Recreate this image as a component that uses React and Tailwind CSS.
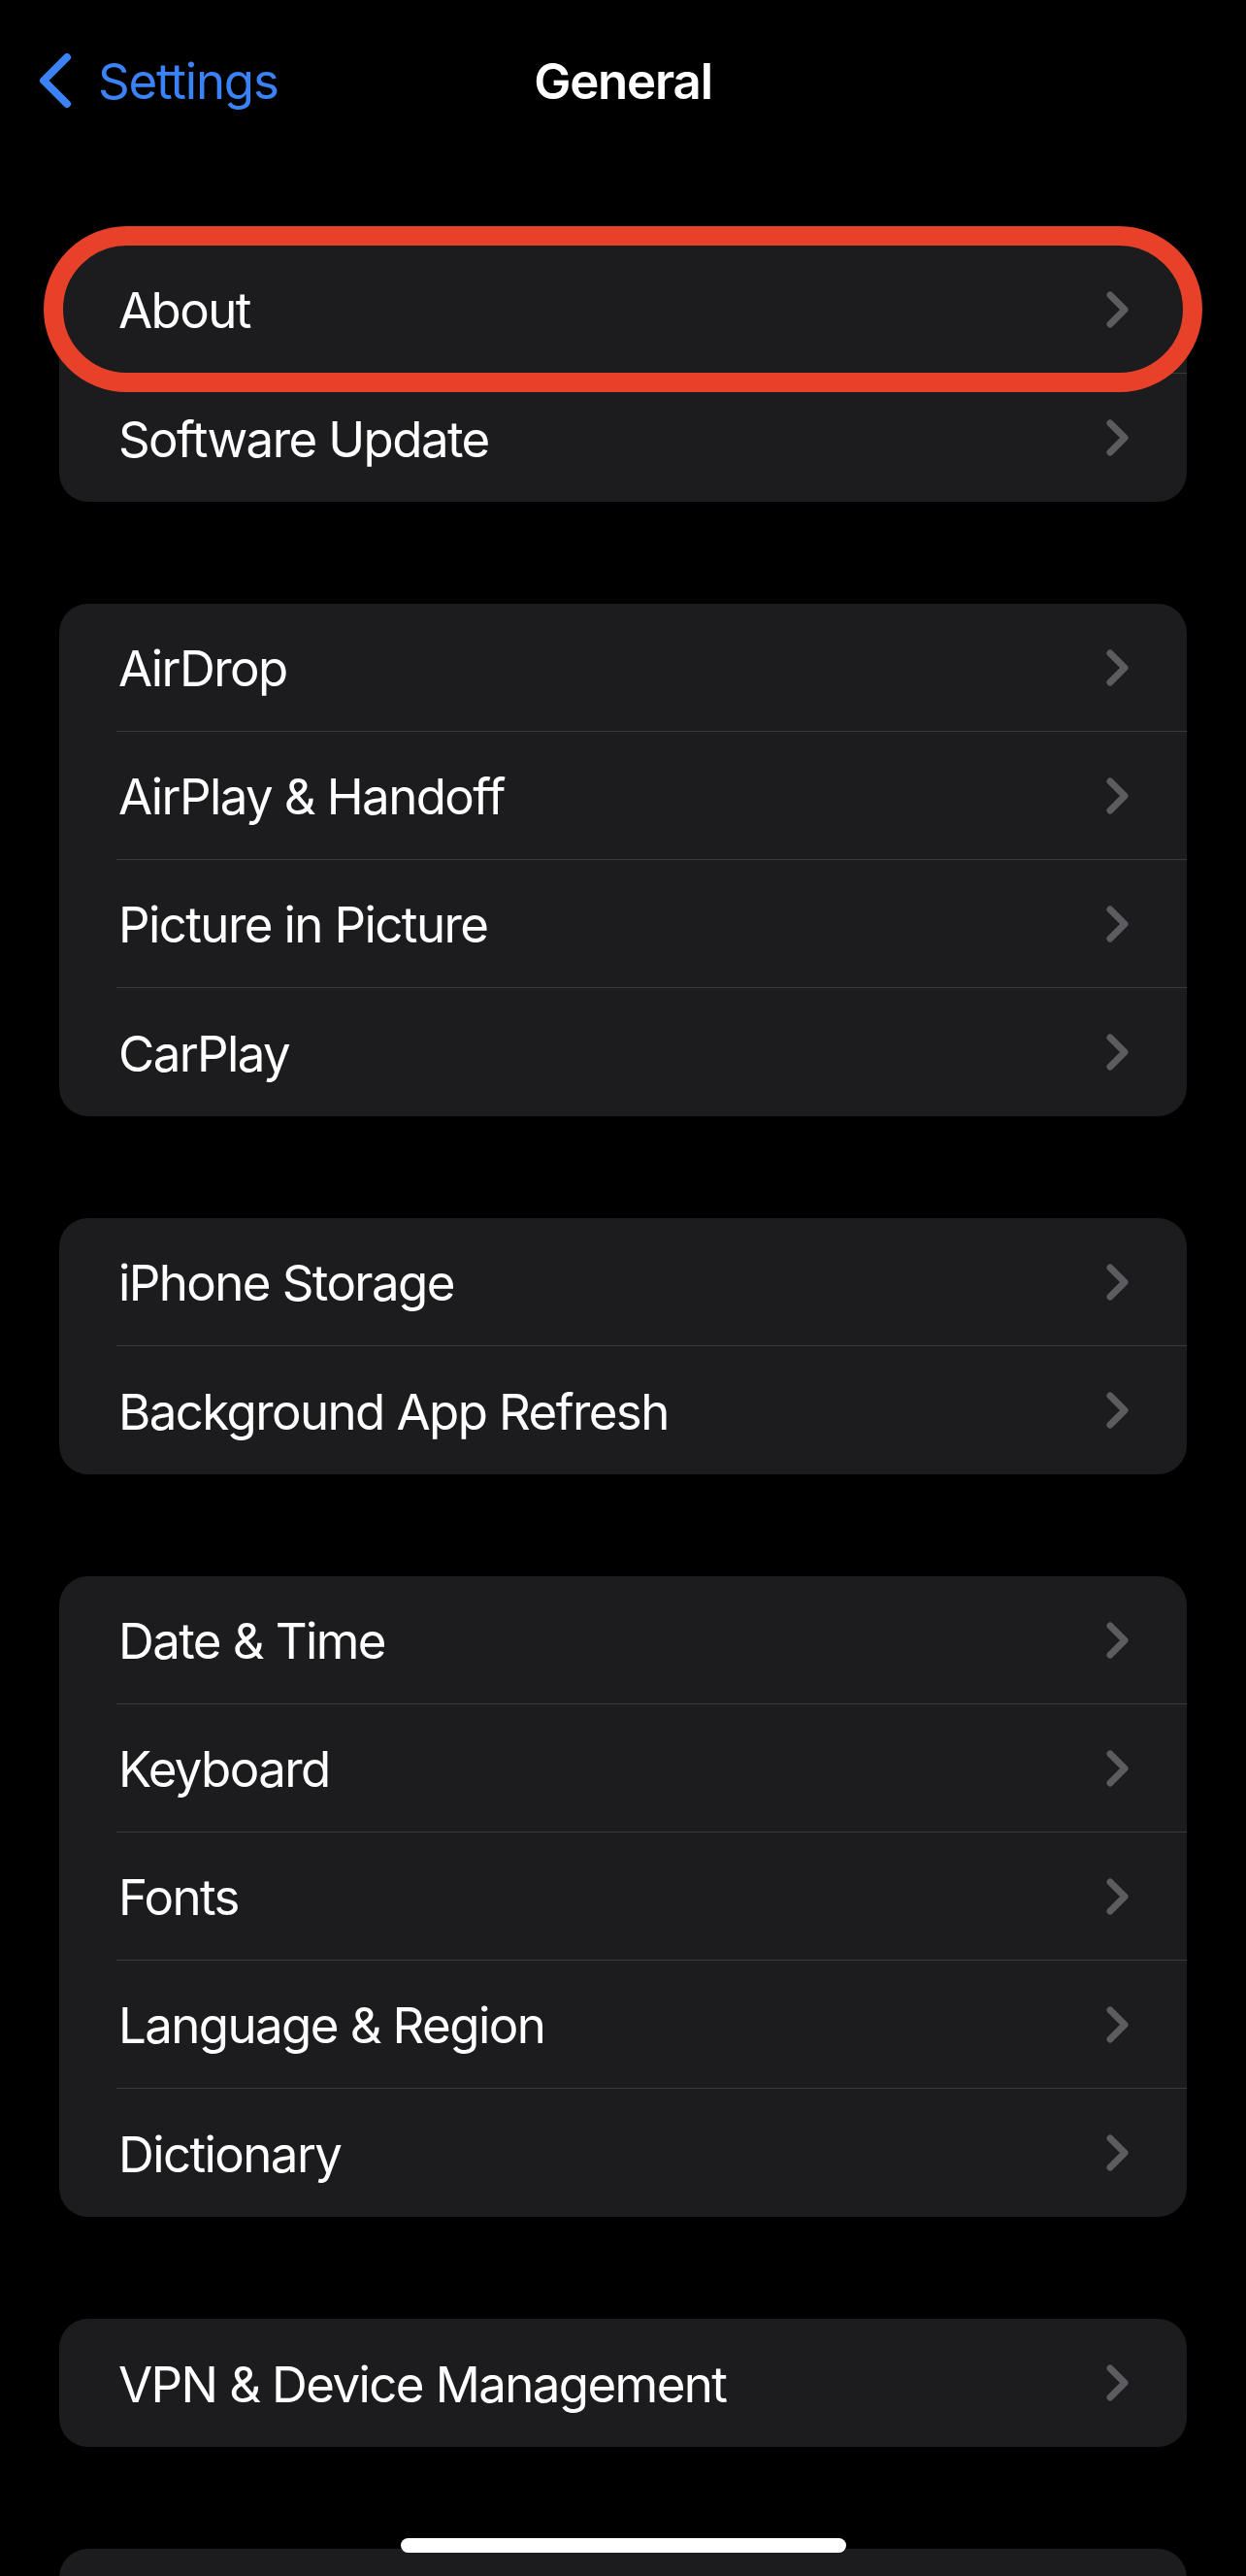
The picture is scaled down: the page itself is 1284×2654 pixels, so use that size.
import React from "react";

const groups = [
  ["About", "Software Update"],
  ["AirDrop", "AirPlay & Handoff", "Picture in Picture", "CarPlay"],
  ["iPhone Storage", "Background App Refresh"],
  ["Date & Time", "Keyboard", "Fonts", "Language & Region", "Dictionary"],
  ["VPN & Device Management"],
  ["Legal & Regulatory"],
];

function Chevron() {
  return (
    <svg width="24" height="38" viewBox="0 0 24 38" className="shrink-0">
      <path
        d="M4 4 L19 19 L4 34"
        fill="none"
        stroke="#5B5B60"
        strokeWidth="7"
        strokeLinecap="round"
        strokeLinejoin="round"
      />
    </svg>
  );
}

function Row({ label, last, highlight }) {
  return (
    <div className="relative h-[132px] pl-[59px]">
      <div
        className={
          "flex h-full items-center pr-[59px] " +
          (last ? "" : "border-b border-[#3A3A3C]")
        }
      >
        <span className="flex-1 pl-[2px] pt-[4px] text-[51px] tracking-[-1.6px] text-white">
          {label}
        </span>
        <Chevron />
      </div>
      {highlight && (
        <div className="pointer-events-none absolute left-[-16px] right-[-16px] top-[-20px] bottom-[-19px] rounded-full border-[20px] border-[#E8412A]" />
      )}
    </div>
  );
}

export default function App() {
  return (
    <div
      className="relative h-[2654px] w-[1284px] overflow-hidden bg-black"
      style={{ fontFamily: "Inter, 'Noto Sans', sans-serif" }}
    >
      <div className="relative flex h-[66px] items-center mt-[50px]">
        <div className="flex items-center pl-[40px]">
          <svg width="34" height="56" viewBox="0 0 34 56">
            <path
              d="M29 4 L5 28 L29 52"
              fill="none"
              stroke="#3B82F7"
              strokeWidth="8"
              strokeLinecap="round"
              strokeLinejoin="round"
            />
          </svg>
          <span className="ml-[27px] pt-[3px] text-[51px] tracking-[-1.2px] text-[#3B82F7]">
            Settings
          </span>
        </div>
        <div className="absolute inset-x-0 pt-[3px] text-center text-[51px] font-semibold tracking-[-1.2px] text-white">
          General
        </div>
      </div>

      <div className="mt-[137px] flex flex-col gap-[105px] px-[61px]">
        {groups.map((g, gi) => (
          <div key={gi} className="rounded-[30px] bg-[#1C1C1E]">
            {g.map((label, i) => (
              <Row
                key={label}
                label={label}
                last={i === g.length - 1}
                highlight={gi === 0 && i === 0}
              />
            ))}
          </div>
        ))}
      </div>

      <div className="absolute left-[413px] top-[2615px] h-[15px] w-[459px] rounded-full bg-white" />
    </div>
  );
}
